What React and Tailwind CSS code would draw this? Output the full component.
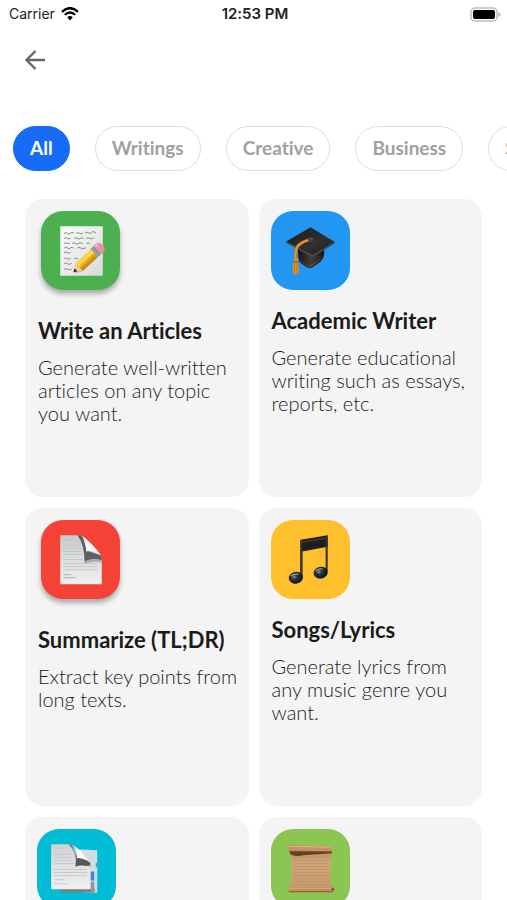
import React from 'react'

const NoteIcon = () => (
  <svg viewBox="0 0 78 78" className="size-full" aria-hidden="true">
    <defs>
      <linearGradient id="notePaper" x1="0" y1="0" x2="1" y2="1">
        <stop offset="0" stopColor="#fafafa" />
        <stop offset="1" stopColor="#d9dbdb" />
      </linearGradient>
      <linearGradient id="pencilBody" x1="0" y1="0" x2="0" y2="1">
        <stop offset="0" stopColor="#ffd94e" />
        <stop offset="0.5" stopColor="#f8b81f" />
        <stop offset="1" stopColor="#c47d0b" />
      </linearGradient>
    </defs>
    <path d="M19 15H61V64H19Z" fill="url(#notePaper)" />
    <g fill="none" stroke="#7b8082" strokeWidth="0.900" strokeLinecap="round">
      <path d="M23 22q1.500 -1.500 3 0t3 0t3 -0.500M35 22q1.500 -1.500 3 0t3 -0.300M44 21.500q1.500 -1.500 3 0t3 -0.500t4 0.500" />
      <path d="M23 27q1.500 -1.500 3 0t3 0M33 27q1.500 -1.500 3 0t3 0t3 0M45 27q1.500 -1.500 3 0t4 -0.500" />
      <path d="M23 32q1 -1.500 3 0h2M31 32q1.500 -1.500 3 0t3 0t4 0M45 32q1.500 -1.500 3 0" />
      <path d="M23 36.500q1.500 -1.500 3 0t3 0t3 0M36 36.500q1.500 -1.500 3 0t5 0" />
      <path d="M23 41q1.500 -1.500 3 0t3 0" />
      <path d="M23 47q1.500 -1.500 3 0t3 0M33 47q1 -1 3 0" />
      <path d="M23 52q1.500 -1.500 3 0t4 0M23 57.500q1.500 -1.500 3 0t4 0" />
    </g>
    <path d="M33 62L42 59L62 40L60 37Z" fill="#777" opacity="0.45" />
    <g transform="translate(32 60.500) rotate(-43)">
      <path d="M0 0L8 -5V5Z" fill="#efcf9b" />
      <path d="M0 0L3.500 -2.200V2.200Z" fill="#2f2f2f" />
      <path d="M7 -5.200H29V5.200H7Q9 3.500 7 1.700Q9 0 7 -1.700Q9 -3.500 7 -5.200Z" fill="url(#pencilBody)" />
      <path d="M8 -1.700H29" stroke="#ffe88a" strokeWidth="1" />
      <path d="M8 2H29" stroke="#d48e12" strokeWidth="0.800" />
      <rect x="28" y="-5.400" width="5" height="10.800" fill="#a5a9ad" />
      <path d="M29.700 -5.400V5.400M31.500 -5.400V5.400" stroke="#6f757b" strokeWidth="0.700" />
      <path d="M33 -5.400H36Q39.500 -5 39.500 0T36 5.400H33Z" fill="#ef8fa0" />
      <path d="M34 -3.500H36" stroke="#fac4cc" strokeWidth="1.500" strokeLinecap="round" />
    </g>
  </svg>
)

const CapIcon = () => (
  <svg viewBox="0 0 78 78" className="size-full" aria-hidden="true">
    <defs>
      <linearGradient id="capBoard" x1="0" y1="0" x2="1" y2="1">
        <stop offset="0" stopColor="#1b1b1b" />
        <stop offset="0.6" stopColor="#303030" />
        <stop offset="1" stopColor="#191919" />
      </linearGradient>
      <linearGradient id="capBowl" x1="0" y1="0" x2="1" y2="0">
        <stop offset="0" stopColor="#151515" />
        <stop offset="0.5" stopColor="#3f3f3f" />
        <stop offset="1" stopColor="#151515" />
      </linearGradient>
    </defs>
    <path d="M27 34L52 36Q54 45 49 50L40 56.500Q36 57.500 28 50Q26 42 27 34Z" fill="url(#capBowl)" />
    <path d="M28 48Q36 55 39 54Q46 51 50 46" fill="none" stroke="#555" strokeWidth="0.700" />
    <path d="M39 16L63 30.500L41 43.500L15 30Z" fill="url(#capBoard)" />
    <path d="M15 30L41 43.500L63 30.500V32L41 45.500L15 31.500Z" fill="#4a4a4a" />
    <path d="M40 28Q31 30 27 34Q23 38 24.500 50" fill="none" stroke="#a5671b" strokeWidth="3.200" strokeLinecap="round" />
    <path d="M39 28Q31 30 27 34Q23 38 24.500 50" fill="none" stroke="#e69b2c" strokeWidth="2" strokeLinecap="round" />
    <path d="M36 27.500Q39 26 42 28Q41 31 38 31Z" fill="#404040" />
    <path d="M23 47H26Q27 50 27.500 61Q24.500 64 21.500 61.500Q21 54 23 47Z" fill="#e8901c" />
    <path d="M23.500 52L23 62M25.500 52V62" stroke="#b96a0e" strokeWidth="0.700" />
    <path d="M22.500 50.500H26.500" stroke="#8f5410" strokeWidth="1.200" />
  </svg>
)

const PageIcon = () => (
  <svg viewBox="0 0 78 78" className="size-full" aria-hidden="true">
    <defs>
      <linearGradient id="pagePaper" x1="0" y1="0" x2="0" y2="1">
        <stop offset="0" stopColor="#c9cbcb" />
        <stop offset="0.5" stopColor="#dddede" />
        <stop offset="1" stopColor="#efefef" />
      </linearGradient>
      <linearGradient id="pageCurl" x1="0" y1="1" x2="1" y2="0">
        <stop offset="0" stopColor="#c4c6c6" />
        <stop offset="0.4" stopColor="#fbfbfb" />
        <stop offset="1" stopColor="#f1f1f1" />
      </linearGradient>
    </defs>
    <path d="M19 15H40L60 36V63.500H19Z" fill="url(#pagePaper)" />
    <path d="M36 15H41L45 30L60 35V40Q52 37 43 41Q43 24 36 15Z" fill="#5e6161" />
    <path d="M40 15Q45 21 44.500 31Q53 29 60 36Q52 24 40 15Z" fill="url(#pageCurl)" />
    <path d="M43 41Q52 37 60 40V42Q52 40 43 43Z" fill="#a9abab" />
    <g stroke="#bcc0c1" strokeWidth="0.800">
      <path d="M22 19.500H31M22 25H39M22 28H40M22 31H39M22 34H40M22 39H41M22 43H56M22 46H55M22 49H56" />
      <path d="M22 54H30M22 57H34" stroke="#9ca0a1" />
    </g>
  </svg>
)

const MusicIcon = () => (
  <svg viewBox="0 0 78 78" className="size-full" aria-hidden="true">
    <defs>
      <radialGradient id="noteHead" cx="0.4" cy="0.4" r="0.6">
        <stop offset="0" stopColor="#8b9599" />
        <stop offset="0.35" stopColor="#2d3439" />
        <stop offset="1" stopColor="#0d1013" />
      </radialGradient>
    </defs>
    <path d="M29 19.500L56 15V26.500L31 31V57H29Z" fill="#2c2520" />
    <path d="M30 20.500L55 16V26L30 30Z" fill="#211c20" />
    <path d="M30.500 22L54 18" stroke="#3f3a3e" strokeWidth="1.500" />
    <path d="M30 20V57M55 15.500V51" stroke="#34342c" strokeWidth="2" />
    <path d="M31 31V55M54 27V49" stroke="#777464" strokeWidth="0.500" />
    <ellipse cx="24.500" cy="57" rx="7" ry="5.800" transform="rotate(-12 24.500 57)" fill="url(#noteHead)" />
    <ellipse cx="49" cy="52" rx="7" ry="5.800" transform="rotate(-12 49 52)" fill="url(#noteHead)" />
    <path d="M20 55Q23 52.500 27 53.500M44.500 50Q48 47.500 51 48.500" fill="none" stroke="#a7b2b8" strokeWidth="1" strokeLinecap="round" />
  </svg>
)

const PagesIcon = () => (
  <svg viewBox="0 0 78 78" className="size-full" aria-hidden="true">
    <defs>
      <linearGradient id="pagesFront" x1="0" y1="0" x2="0" y2="1">
        <stop offset="0" stopColor="#cfd2d2" />
        <stop offset="1" stopColor="#f0f0f0" />
      </linearGradient>
    </defs>
    <path d="M38 20L59.500 21V63L38 62Z" fill="#d3dce2" />
    <path d="M23 59H57V62.500H23Z" fill="#758084" />
    <path d="M14 15H33L53 36V59.500H14Z" fill="url(#pagesFront)" />
    <path d="M53 42H56.500V51H53Z" fill="#3b8ae3" />
    <path d="M53 52H56.500V62H53Z" fill="#90989c" />
    <path d="M58 34L61 32V37L58 38Z" fill="#3da5db" />
    <path d="M31 15H34L40 28L53 35V37Q46 35 38 37Q40 23 31 15Z" fill="#7b8080" />
    <path d="M34 15Q41 20 39.500 29Q47 27 53 35Q44 20 34 15Z" fill="#fafafa" />
    <path d="M39 29Q48 29 53 34Q50 37 47 36Q43 35 38 37Z" fill="#555959" />
    <g stroke="#c1c5c6" strokeWidth="0.800">
      <path d="M17 19H25M17 25H34M17 28H35M17 31H35M17 34H36M17 40H49M17 43H50M17 46H49M17 50H27M17 54H30" />
    </g>
  </svg>
)

const ScrollIcon = () => (
  <svg viewBox="0 0 78 78" className="size-full" aria-hidden="true">
    <defs>
      <linearGradient id="scrollBody" x1="0" y1="0" x2="0" y2="1">
        <stop offset="0" stopColor="#b68b60" />
        <stop offset="0.3" stopColor="#d0a77a" />
        <stop offset="1" stopColor="#c69a6b" />
      </linearGradient>
    </defs>
    <path d="M19 21H60Q57 40 60 59H18Q22 40 19 22Z" fill="url(#scrollBody)" />
    <path d="M22 28H57M22 31H57M22 34H57M22 37H57M22 40H57M22 43H57M22 46H57M22 49H57M21 52H58M21 55H58" stroke="#bd9265" strokeWidth="0.700" />
    <path d="M18 22H60V24L32 26Q24 28 19 25Z" fill="#654224" />
    <path d="M16.500 15.500L60.500 17V22.500L18 22Q16 20 16.500 15.500Z" fill="#c59461" />
    <path d="M17 17L60 18" stroke="#dfb588" strokeWidth="1" />
    <path d="M18 22L60 22.500" stroke="#80552f" strokeWidth="1" />
    <path d="M17 57.500L61 57Q63.500 59 61.500 62L17.500 62.500Z" fill="#c18d5a" />
    <path d="M17.500 58.500H60" stroke="#dbaf7f" strokeWidth="1" />
    <path d="M17.500 62H61" stroke="#8a5c35" strokeWidth="1" />
    <circle cx="61" cy="59.500" r="1.500" fill="#8b592f" />
  </svg>
)

const WifiIcon = () => (
  <svg width="18" height="14" viewBox="0 0 18 14" role="img" aria-label="Wi-Fi">
    <path d="M1 4.800Q9 -2.500 17 4.800" fill="none" stroke="#000" strokeWidth="2.400" />
    <path d="M3.800 7.800Q9 3.200 14.200 7.800" fill="none" stroke="#000" strokeWidth="2.200" />
    <path d="M6.200 10.200Q9 7.800 11.800 10.200L9 13.400Z" fill="#000" />
  </svg>
)

const BatteryIcon = () => (
  <svg width="31" height="15" viewBox="0 0 31 15" role="img" aria-label="Battery">
    <rect x="1" y="1" width="26" height="13" rx="4" fill="#fff" stroke="#bdbdbd" strokeWidth="1.500" />
    <rect x="3" y="3" width="22" height="9" rx="2" fill="#000" />
    <path d="M28.500 5Q30.500 5.800 30.500 7.500T28.500 10Z" fill="#b5b5b5" />
  </svg>
)

const categories = ['All', 'Writings', 'Creative', 'Business', 'Social']

const templates = [
  {
    id: 1,
    title: 'Write an Articles',
    text: 'Generate well-written articles on any topic you want.',
    icon: NoteIcon,
    color: 'bg-[#4caf50]',
    raised: true,
  },
  {
    id: 2,
    title: 'Academic Writer',
    text: 'Generate educational writing such as essays, reports, etc.',
    icon: CapIcon,
    color: 'bg-[#2196f3]',
  },
  {
    id: 3,
    title: 'Summarize (TL;DR)',
    text: 'Extract key points from long texts.',
    icon: PageIcon,
    color: 'bg-[#f44336]',
    raised: true,
  },
  {
    id: 4,
    title: 'Songs/Lyrics',
    text: 'Generate lyrics from any music genre you want.',
    icon: MusicIcon,
    color: 'bg-[#ffc02d]',
  },
  { id: 5, icon: PagesIcon, color: 'bg-[#00bcd4]' },
  { id: 6, icon: ScrollIcon, color: 'bg-[#8bc653]' },
]

const TemplateCard = ({ item }) => {
  const Icon = item.icon
  return (
    <article className="min-h-[298px] rounded-[18px] bg-[#f4f4f4] p-3 pr-1">
      <div
        className={`size-[79px] rounded-[22px] ${item.color} ${
          item.raised ? 'ml-1 mb-[27px] shadow-[0_4px_5px_rgba(0,0,0,0.3)]' : 'mb-[17px]'
        }`}
      >
        <Icon />
      </div>
      {item.title && (
        <div className="pl-px">
          <h2 className="text-[22px] leading-7 font-bold text-[#1b1b1b] whitespace-nowrap">{item.title}</h2>
          <p className="mt-[11px] text-[20px] leading-[23px] font-light text-[#222]">{item.text}</p>
        </div>
      )}
    </article>
  )
}

function App() {
  return (
    <div className="flex h-screen flex-col overflow-hidden bg-white font-['Lato',sans-serif] [font-variant-ligatures:none]">
      {/* Status Bar */}
      <div className="grid h-7 shrink-0 grid-cols-3 items-center pl-[9px] pr-[6px] font-['Inter',sans-serif] text-[#222]">
        <div className="flex items-center gap-1.5 text-sm">
          <span>Carrier</span>
          <WifiIcon />
        </div>
        <span className="text-center text-[15px] font-semibold">12:53 PM</span>
        <div className="flex justify-end">
          <BatteryIcon />
        </div>
      </div>

      {/* Header */}
      <header className="flex h-16 shrink-0 items-center px-6">
        <button type="button" aria-label="Back">
          <svg width="22" height="22" viewBox="0 0 22 22" fill="none" stroke="#666" strokeWidth="2.400">
            <path d="M21 11H3.500M11.500 2L2.500 11L11.500 20" />
          </svg>
        </button>
      </header>

      {/* Categories */}
      <nav className="mt-[34px] flex shrink-0 gap-[25px] overflow-x-auto pl-[13px] text-[19px] font-bold [scrollbar-width:none]">
        {categories.map((name) => (
          <button
            key={name}
            type="button"
            className={`h-[45px] shrink-0 rounded-full border px-4 ${
              name === 'All' ? 'border-[#176cf7] bg-[#176cf7] text-white' : 'border-[#dedede] bg-white text-[#a0a0a0]'
            }`}
          >
            {name}
          </button>
        ))}
      </nav>

      {/* Templates */}
      <main className="mt-7 min-h-0 flex-1 overflow-y-auto px-[25px] [scrollbar-width:none]">
        <div className="grid grid-cols-2 gap-x-2.5 gap-y-[11px]">
          {templates.map((item) => (
            <TemplateCard key={item.id} item={item} />
          ))}
        </div>
      </main>
    </div>
  )
}

export default App
